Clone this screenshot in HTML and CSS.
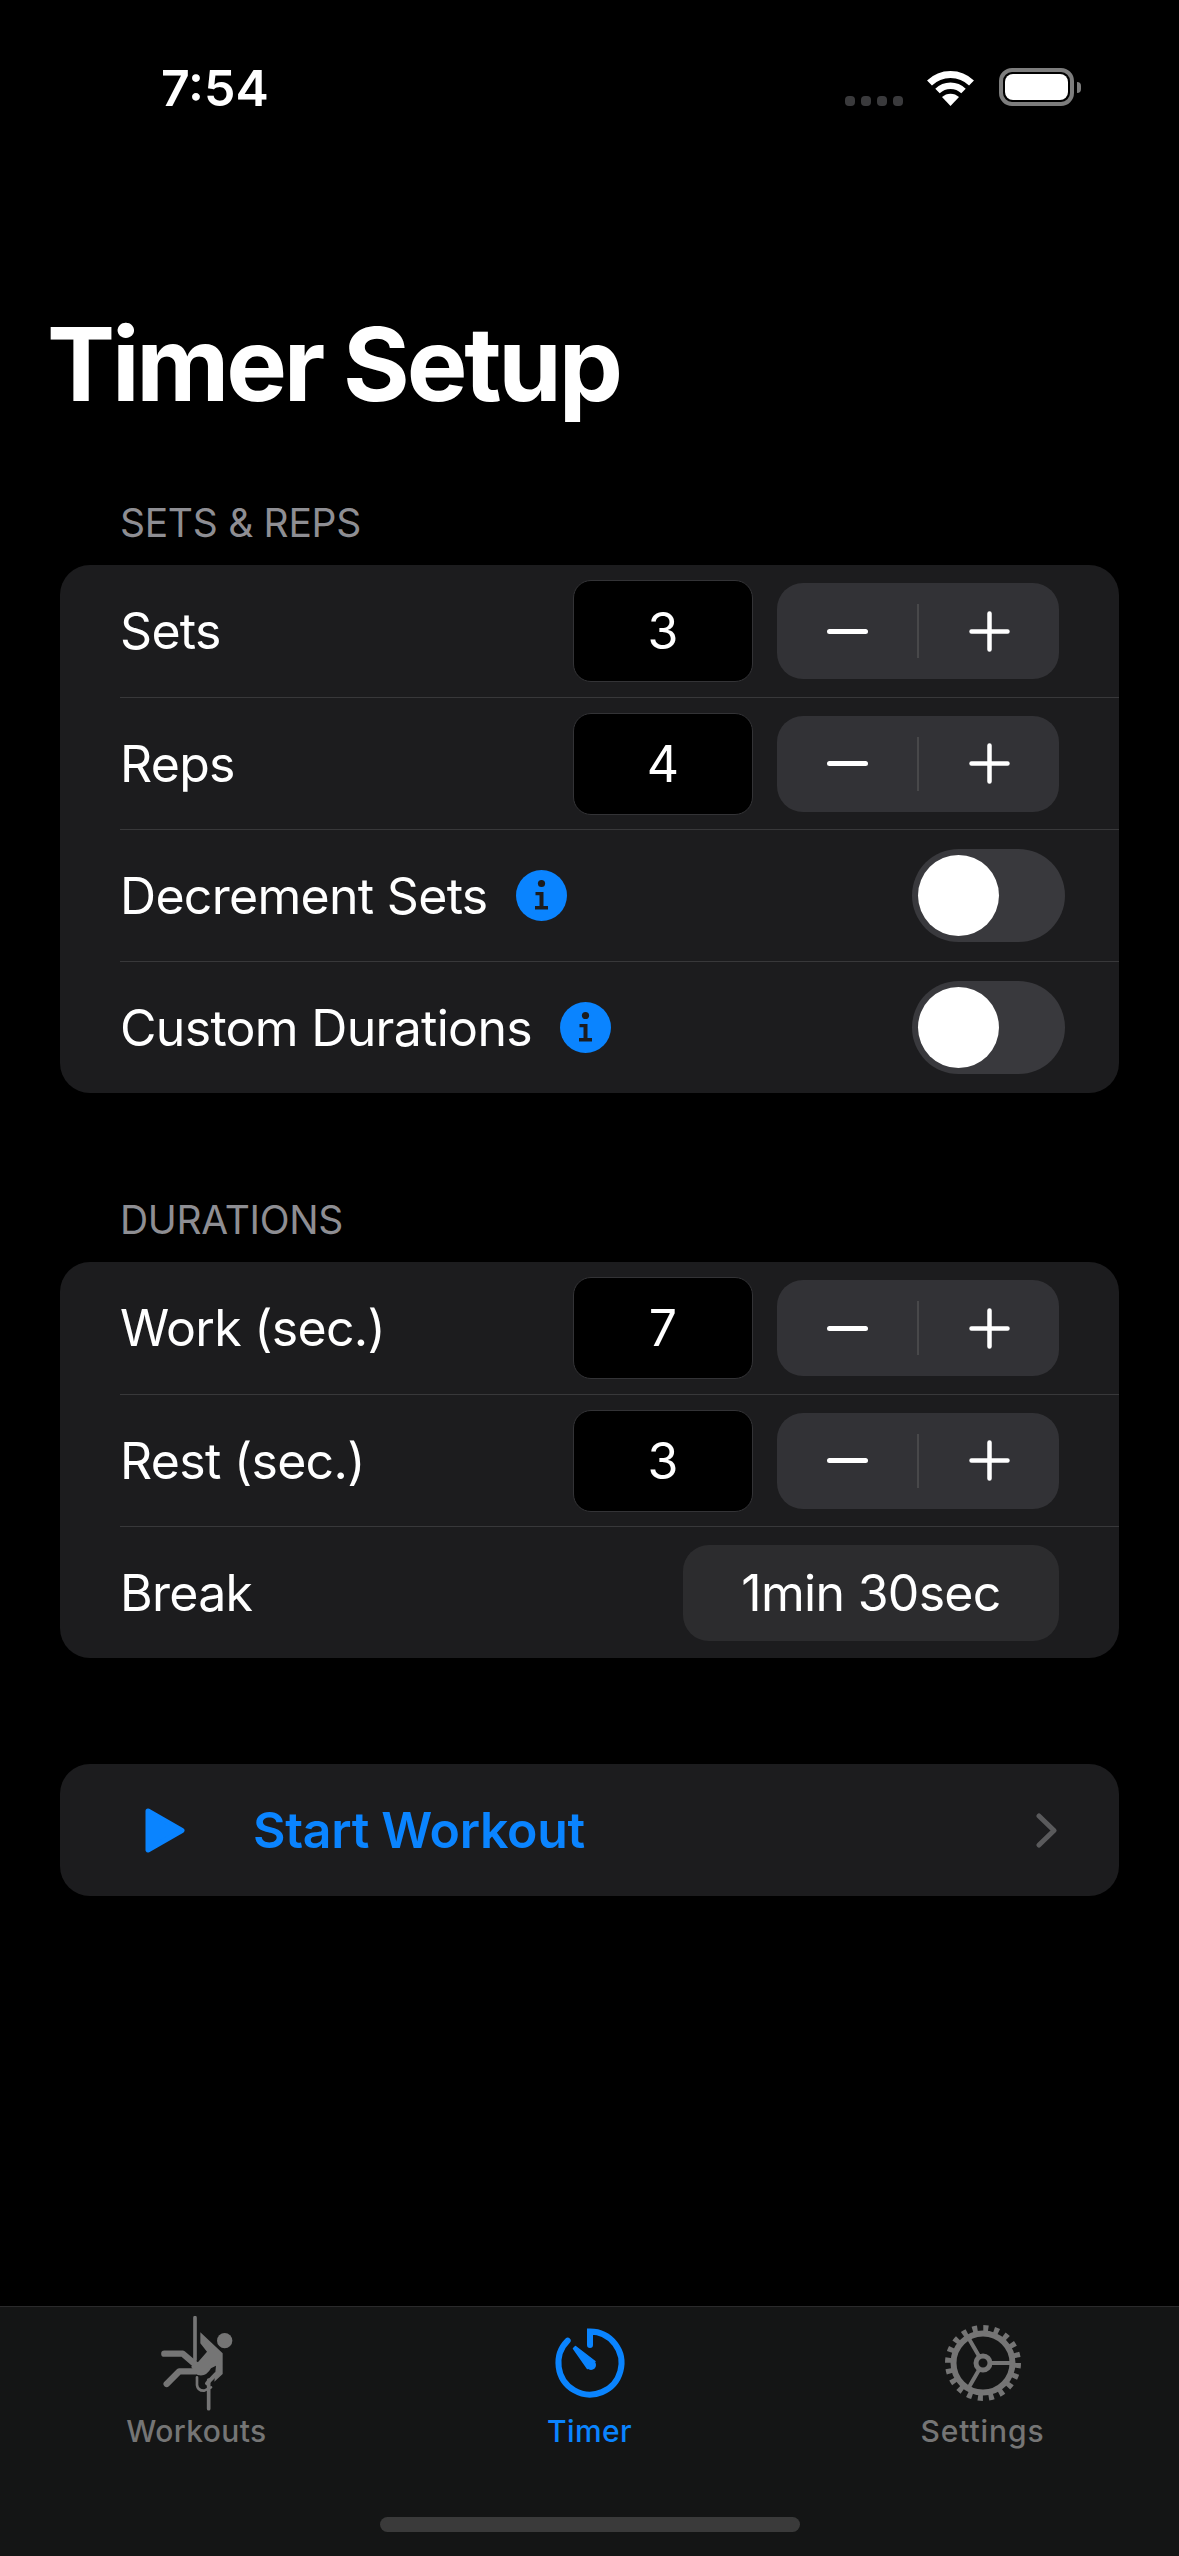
FILE: index.html
```html
<!DOCTYPE html>
<html>
<head>
    <title>Timer Setup</title>
    <link rel="stylesheet" href="styles.css">
</head>
<body>
    <div class="screen">
        <div class="status-bar">
            <span class="status-time">7:54</span>
            <div class="status-icons">
                <div class="signal-dots"><i></i><i></i><i></i><i></i></div>
                <svg class="wifi" viewBox="0 0 50 37" width="50" height="37">
                    <path d="M3.5 14 A30 30 0 0 1 45.5 14" fill="none" stroke="#fff" stroke-width="7"/>
                    <path d="M11.5 22 A19 19 0 0 1 37.5 22" fill="none" stroke="#fff" stroke-width="6.5"/>
                    <path d="M24.5 37 L16 28 A12.5 12.5 0 0 1 33 28 Z" fill="#fff"/>
                </svg>
                <div class="battery">
                    <div class="battery-body"><div class="battery-level"></div></div>
                    <div class="battery-cap"></div>
                </div>
            </div>
        </div>

        <h1 class="page-title">Timer Setup</h1>

        <h2 class="section-title">SETS &amp; REPS</h2>
        <div class="card">
            <div class="row">
                <span class="row-label">Sets</span>
                <div class="value-box">3</div>
                <div class="stepper">
                    <span class="step-btn"><svg viewBox="0 0 41 41" width="41" height="41"><path d="M2.5 20.5 H38.5" stroke="#fff" stroke-width="5" stroke-linecap="round"/></svg></span>
                    <span class="step-line"></span>
                    <span class="step-btn"><svg viewBox="0 0 41 41" width="41" height="41"><path d="M2.5 20.5 H38.5 M20.5 2.5 V38.5" stroke="#fff" stroke-width="4.5" stroke-linecap="round"/></svg></span>
                </div>
            </div>
            <div class="row">
                <span class="row-label">Reps</span>
                <div class="value-box">4</div>
                <div class="stepper">
                    <span class="step-btn"><svg viewBox="0 0 41 41" width="41" height="41"><path d="M2.5 20.5 H38.5" stroke="#fff" stroke-width="5" stroke-linecap="round"/></svg></span>
                    <span class="step-line"></span>
                    <span class="step-btn"><svg viewBox="0 0 41 41" width="41" height="41"><path d="M2.5 20.5 H38.5 M20.5 2.5 V38.5" stroke="#fff" stroke-width="4.5" stroke-linecap="round"/></svg></span>
                </div>
            </div>
            <div class="row">
                <span class="row-label">Decrement Sets</span>
                <svg class="info-icon" viewBox="0 0 51 51" width="51" height="51">
                    <circle cx="25.5" cy="25.5" r="25.5" fill="#0a84ff"/>
                    <circle cx="25.5" cy="13.5" r="3.6" fill="#1c1c1e"/>
                    <path d="M19.5 22 H27.5 V36 H32 V39.5 H19 V36 H23.5 V25.3 H19.5 Z" fill="#1c1c1e"/>
                </svg>
                <div class="toggle"><div class="toggle-thumb"></div></div>
            </div>
            <div class="row">
                <span class="row-label">Custom Durations</span>
                <svg class="info-icon" viewBox="0 0 51 51" width="51" height="51">
                    <circle cx="25.5" cy="25.5" r="25.5" fill="#0a84ff"/>
                    <circle cx="25.5" cy="13.5" r="3.6" fill="#1c1c1e"/>
                    <path d="M19.5 22 H27.5 V36 H32 V39.5 H19 V36 H23.5 V25.3 H19.5 Z" fill="#1c1c1e"/>
                </svg>
                <div class="toggle"><div class="toggle-thumb"></div></div>
            </div>
        </div>

        <h2 class="section-title section-gap">DURATIONS</h2>
        <div class="card">
            <div class="row">
                <span class="row-label">Work (sec.)</span>
                <div class="value-box">7</div>
                <div class="stepper">
                    <span class="step-btn"><svg viewBox="0 0 41 41" width="41" height="41"><path d="M2.5 20.5 H38.5" stroke="#fff" stroke-width="5" stroke-linecap="round"/></svg></span>
                    <span class="step-line"></span>
                    <span class="step-btn"><svg viewBox="0 0 41 41" width="41" height="41"><path d="M2.5 20.5 H38.5 M20.5 2.5 V38.5" stroke="#fff" stroke-width="4.5" stroke-linecap="round"/></svg></span>
                </div>
            </div>
            <div class="row">
                <span class="row-label">Rest (sec.)</span>
                <div class="value-box">3</div>
                <div class="stepper">
                    <span class="step-btn"><svg viewBox="0 0 41 41" width="41" height="41"><path d="M2.5 20.5 H38.5" stroke="#fff" stroke-width="5" stroke-linecap="round"/></svg></span>
                    <span class="step-line"></span>
                    <span class="step-btn"><svg viewBox="0 0 41 41" width="41" height="41"><path d="M2.5 20.5 H38.5 M20.5 2.5 V38.5" stroke="#fff" stroke-width="4.5" stroke-linecap="round"/></svg></span>
                </div>
            </div>
            <div class="row">
                <span class="row-label">Break</span>
                <div class="break-btn">1min 30sec</div>
            </div>
        </div>

        <div class="card start-card">
            <svg class="play-icon" viewBox="0 0 40 45" width="40" height="45">
                <path d="M3 3 L37 22.5 L3 42 Z" fill="#0a84ff" stroke="#0a84ff" stroke-width="5" stroke-linejoin="round"/>
            </svg>
            <span class="start-label">Start Workout</span>
            <svg class="chevron" viewBox="0 0 21 35" width="21" height="35">
                <path d="M3 3 L18 17.5 L3 32" fill="none" stroke="#5a5a5c" stroke-width="5" stroke-linecap="round" stroke-linejoin="round"/>
            </svg>
        </div>

        <div class="tab-bar">
            <div class="tab">
                <svg class="tab-icon" viewBox="144 48 288 288" width="96" height="96">
                    <g fill="none" stroke="#757575" stroke-linecap="round" stroke-linejoin="round">
                        <path d="M282 53 V180 M323 240 V326" stroke-width="11"/>
                        <path d="M190 161 H245 L285 195" stroke-width="19"/>
                        <path d="M197 252 L235 214 H285" stroke-width="19"/>
                        <path d="M288 232 V255 Q290 273 310 272 L330 262" stroke-width="8"/>
                        <path d="M318 250 L345 222" stroke-width="12"/>
                    </g>
                    <circle cx="371" cy="122" r="23" fill="#757575"/>
                    <path d="M298 97 L365 160 V222 L340 245 L345 197 L330 205 Q315 232 290 225 L270 200 L292 185 L318 155 L298 130 Z" fill="#757575"/>
                </svg>
                <span class="tab-label">Workouts</span>
            </div>
            <div class="tab tab-active">
                <svg class="tab-icon" viewBox="0 0 96 96" width="96" height="96">
                    <path d="M48 29 V15.5 A31.5 31.5 0 1 1 25.7 24.7" fill="none" stroke="#0a84ff" stroke-width="6" stroke-linecap="round"/>
                    <circle cx="49" cy="49" r="5" fill="#0a84ff"/>
                    <path d="M31.5 32.5 L33.5 30.5 L53 45.5 L45.5 52.5 Z" fill="#0a84ff" stroke="#0a84ff" stroke-width="1.5" stroke-linejoin="round"/>
                </svg>
                <span class="tab-label">Timer</span>
            </div>
            <div class="tab tab-settings">
                <svg class="tab-icon" viewBox="0 0 96 96" width="96" height="96">
                    <g fill="none" stroke="#757575">
                        <circle cx="48" cy="47" r="29.5" stroke-width="6"/>
                        <circle cx="48" cy="47" r="34.5" stroke-width="7" stroke-dasharray="5 5.84"/>
                        <circle cx="48" cy="47" r="7" stroke-width="5"/>
                        <path d="M55 47 H77 M44.5 41 L33.5 22 M44.5 53 L33.5 72" stroke-width="4"/>
                    </g>
                </svg>
                <span class="tab-label">Settings</span>
            </div>
            <div class="home-indicator"></div>
        </div>
    </div>
</body>
</html>
```

FILE: styles.css
```css
body {
    font-family: Inter, "Noto Sans", sans-serif;
    background-color: #000;
    color: #fff;
    margin: 0;
    padding: 0;
}

.screen {
    display: flex;
    flex-direction: column;
    height: 2556px;
    overflow: hidden;
}

.status-bar {
    display: flex;
    justify-content: space-between;
    align-items: flex-end;
    height: 106px;
    padding: 0 98px 0 161px;
}

.status-time {
    font-size: 50px;
    font-weight: 600;
    line-height: 36px;
}

.status-icons {
    display: flex;
    align-items: flex-end;
    gap: 23px;
}

.signal-dots {
    display: flex;
    gap: 6px;
}

.signal-dots i {
    width: 10px;
    height: 10px;
    border-radius: 4px;
    background-color: #3a3a3c;
}

.wifi {
    display: block;
}

.battery {
    display: flex;
    align-items: center;
    gap: 3px;
}

.battery-body {
    box-sizing: border-box;
    width: 75px;
    height: 38px;
    padding: 2px;
    border: 4px solid #7d7d7d;
    border-radius: 13px;
}

.battery-level {
    height: 100%;
    border-radius: 8px;
    background-color: #fff;
}

.battery-cap {
    width: 4px;
    height: 11px;
    border-radius: 0 4px 4px 0;
    background-color: #7d7d7d;
}

.page-title {
    margin: 200px 0 0 47px;
    font-size: 102px;
    font-weight: 700;
    line-height: 116px;
    letter-spacing: -3.2px;
}

.section-title {
    margin: 78px 0 19px 120px;
    font-size: 39px;
    font-weight: 400;
    line-height: 46px;
    letter-spacing: -0.3px;
    color: #8e8e93;
}

.section-gap {
    margin-top: 104px;
}

.card {
    margin: 0 60px;
    border-radius: 30px;
    background-color: #1c1c1e;
    overflow: hidden;
}

.row {
    box-sizing: border-box;
    display: flex;
    align-items: center;
    height: 132px;
    margin-left: 60px;
    border-top: 1px solid #38383a;
}

.row:first-child {
    border-top: none;
}

.row-label {
    font-size: 50px;
    line-height: 60px;
    letter-spacing: -0.7px;
}

.value-box {
    box-sizing: border-box;
    display: flex;
    justify-content: center;
    align-items: center;
    width: 180px;
    height: 102px;
    margin-left: auto;
    border: 1px solid #333336;
    border-radius: 18px;
    background-color: #000;
    font-size: 50px;
}

.stepper {
    display: flex;
    align-items: center;
    width: 282px;
    height: 96px;
    margin: 0 60px 0 24px;
    border-radius: 26px;
    background-color: #323236;
}

.step-btn {
    flex: 1;
    display: flex;
    justify-content: center;
}

.step-line {
    width: 2px;
    height: 54px;
    background-color: #48484a;
}

.info-icon {
    margin-left: 28px;
}

.toggle {
    box-sizing: border-box;
    width: 153px;
    height: 93px;
    margin-left: auto;
    margin-right: 54px;
    padding: 6px;
    border-radius: 47px;
    background-color: #39393d;
}

.toggle-thumb {
    width: 81px;
    height: 81px;
    border-radius: 50%;
    background-color: #fff;
}

.break-btn {
    display: flex;
    justify-content: center;
    align-items: center;
    width: 376px;
    height: 96px;
    margin-left: auto;
    margin-right: 60px;
    border-radius: 26px;
    background-color: #2c2c2e;
    font-size: 50px;
    letter-spacing: -0.7px;
}

.start-card {
    display: flex;
    align-items: center;
    height: 132px;
    margin-top: 106px;
}

.play-icon {
    margin-left: 85px;
}

.start-label {
    margin-left: 68px;
    font-size: 50px;
    font-weight: 600;
    letter-spacing: -0.3px;
    color: #0a84ff;
}

.chevron {
    margin-left: auto;
    margin-right: 62px;
}

.tab-bar {
    position: relative;
    display: flex;
    margin-top: auto;
    height: 250px;
    padding-top: 9px;
    box-sizing: border-box;
    border-top: 1px solid #2a2a2b;
    background-color: #141515;
}

.tab {
    flex: 1;
    display: flex;
    flex-direction: column;
    align-items: center;
    color: #757575;
}

.tab-active {
    color: #0a84ff;
}

.tab-icon {
    display: block;
}

.tab-label {
    margin-top: 1px;
    font-size: 30px;
    font-weight: 500;
    line-height: 36px;
    letter-spacing: 0.4px;
}

.tab-settings .tab-label {
    letter-spacing: 0.9px;
}

.home-indicator {
    position: absolute;
    left: 380px;
    bottom: 24px;
    width: 420px;
    height: 15px;
    border-radius: 8px;
    background-color: #3a3a3a;
}
```
